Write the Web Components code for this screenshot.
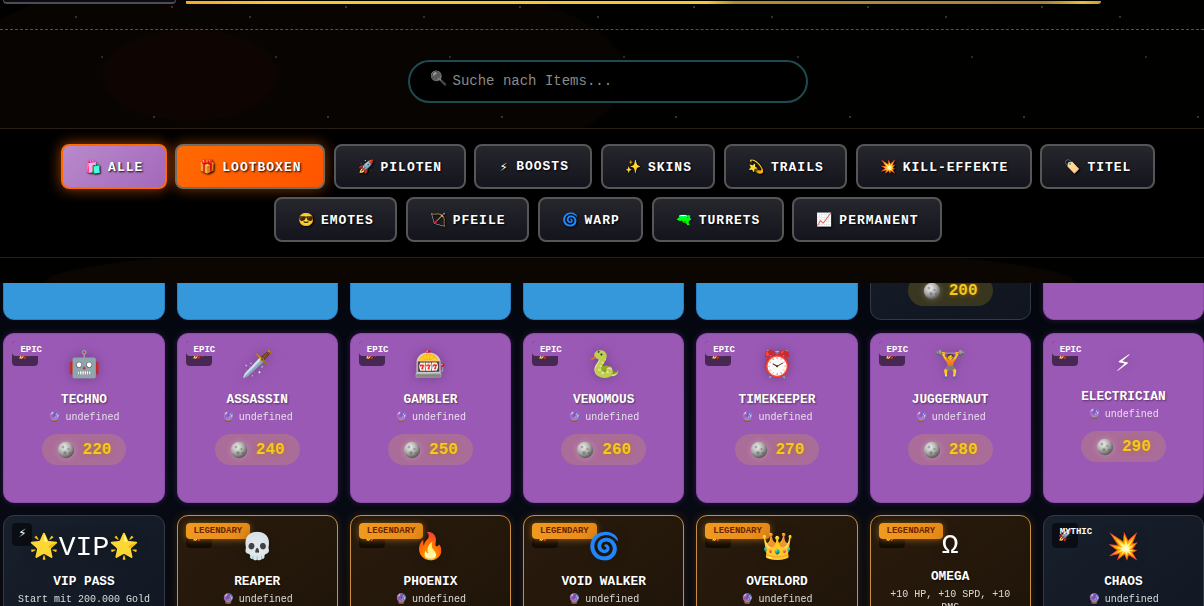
<!doctype html>
<html lang="de"><head><meta charset="utf-8"><title>Shop</title><style>
html,body{margin:0;padding:0;background:#000;overflow:hidden}
</style></head><body>
<x-shop></x-shop>
<template id="t-coin"><svg width="18" height="18" viewBox="0 0 18 18" aria-hidden="true"><defs><radialGradient id="c" cx=".38" cy=".32" r=".78"><stop offset="0" stop-color="#f2f2f0"/><stop offset=".5" stop-color="#aaaaa8"/><stop offset="1" stop-color="#3e3e3e"/></radialGradient></defs><circle cx="9" cy="9" r="8.2" fill="url(#c)"/><circle cx="6" cy="6" r="1.5" fill="#a5a5a3"/><circle cx="11.5" cy="8" r="1.1" fill="#8f8f8d"/><circle cx="8" cy="12" r="1.7" fill="#838382"/><circle cx="13" cy="12" r="1" fill="#6d6d6d"/></svg></template>
<script>
const MONO='"Liberation Mono",monospace';
class XTopbar extends HTMLElement{constructor(){super();this.attachShadow({mode:'open'}).innerHTML=`<style>
:host{display:flex;align-items:flex-start;gap:10px;box-sizing:border-box;height:30px;padding:0 0 0 3px;border-bottom:1px dashed #57524c;overflow:hidden}
.a{box-sizing:border-box;width:173px;height:4px;border:solid #4c4c54;border-width:0 1px 2px 1px;border-radius:0 0 6px 6px;background:#0b0b10}
.b{width:915px;height:3px;margin-top:.5px;border-radius:0 0 12px 4px;background:linear-gradient(90deg,#f3a92a 0,#f2c83a 10%,#f0c838 57%,#b08c30 60%,#a88630 94%,#e6bc3a 98%,#c9a030 100%)}
</style><div class="a"></div><div class="b"></div>`}}
class XSearch extends HTMLElement{constructor(){super();this.attachShadow({mode:'open'}).innerHTML=`<style>
:host{display:flex;justify-content:center;padding:30px 0 25px 11px}
.box{box-sizing:border-box;width:400px;height:43px;border:2px solid #1e4a50;border-radius:22px;background:#000;display:flex;align-items:center;gap:6px;padding:0 20px;color:#8a8a8a;font:14px ${MONO}}
.i{font-size:14px;filter:grayscale(1) brightness(.75);margin-top:-6px;line-height:1}
.t{margin-top:-1px}
</style><div class="box"><span class="i">🔍</span><span class="t"><slot></slot></span></div>`}}
class XFilter extends HTMLElement{constructor(){super();this.attachShadow({mode:'open'}).innerHTML=`<style>
:host{display:inline-flex;align-items:center;gap:7px;box-sizing:border-box;height:45px;padding:1px 21.5px 0 22px;border:2px solid #565656;border-radius:8px;background:linear-gradient(#26262d,#14141d);color:#fff;font:bold 13px ${MONO};letter-spacing:1px;text-shadow:1px 1px 2px #000;white-space:nowrap}
:host([b]){padding-top:0}
:host([v=all]){background:linear-gradient(135deg,#b98acb,#a468bb);border-color:#ff6a00;box-shadow:0 0 14px #ff6a00a0}
:host([v=on]){background:linear-gradient(135deg,#ff6a00,#ff5400);border-color:#6e6e66;box-shadow:0 0 14px #ff6a0080}
.i{font-size:13px;letter-spacing:0;width:16px;text-align:center;flex:none}
:host([b]) .i{width:11px}
:host([g=turret]) .i{filter:hue-rotate(85deg) saturate(1.4) brightness(1.35)}
:host([g=bag]) .i{filter:hue-rotate(170deg) saturate(1.6) brightness(1.2)}
</style><span class="i"></span><span><slot></slot></span>`;
}connectedCallback(){this.shadowRoot.querySelector('.i').textContent=this.getAttribute('i')}}
class XFilters extends HTMLElement{constructor(){super();this.attachShadow({mode:'open'}).innerHTML=`<style>
:host{display:flex;flex-wrap:wrap;justify-content:center;gap:8px 8.5px;box-sizing:border-box;height:130px;padding:15px 44px 15px 56px;background:#000;border:solid #2a2012;border-width:1px 0;align-content:flex-start}
</style><slot></slot>`}}
class XCard extends HTMLElement{constructor(){super();this.attachShadow({mode:'open'}).innerHTML=`<style>
:host{display:flex;flex-direction:column;align-items:center;position:relative;box-sizing:border-box;height:170px;border-radius:11px;padding-top:14px;color:#fff;font-family:${MONO};border:1px solid #8a4aa5;background:#9b59b6;text-align:center}
:host([r=rare]){background:#3498db;border-color:#2a80c0}
:host([r=epic]){background:#9b59b6;border-color:#8d4ca8;box-shadow:0 0 6px #6a2f8a66}
:host([r=legendary]){background:linear-gradient(145deg,#2a1c0d,#1c1208);border:1.5px solid #c98e3e;box-shadow:0 0 10px #c97f2033}
:host([r=plain]),:host([r=mythic]){background:linear-gradient(145deg,#18202c,#10151f);border:1px solid #323a46}
.type{position:absolute;top:7px;left:8px;box-sizing:border-box;width:26px;height:25px;padding-top:6px;border-radius:4px;background:rgba(0,0,0,.55);text-align:center;font-size:11.5px;line-height:14px}
:host([t=bolt]) .type{width:20px;height:23px;padding-top:4px;font-size:13px}
.rar{position:absolute;top:7px;left:8px;box-sizing:border-box;height:15px;padding:0 8px;font:bold 9px/18px ${MONO};color:#fff;border-radius:4px}
:host([r=epic]) .rar{background:#9b59b6}
:host([r=legendary]) .rar{top:7px;height:16px;line-height:17px;background:linear-gradient(90deg,#f09a20,#e68a18);color:#6d2300;box-shadow:0 1px 6px #f09a2080}
:host([r=mythic]) .rar{background:none}
:host([r=plain]) .rar,:host([r=rare]) .rar{display:none}
.ico{font:normal 26px/36px ${MONO};height:36px;filter:drop-shadow(0 0 6px rgba(0,0,0,.28));white-space:nowrap}
.ico b{font:inherit;font-size:24px;vertical-align:1px}
:host([big]) .ico,:host([short]) .ico{font-size:28px}
:host([short]) .ico{height:31px;line-height:31px}
:host([mid]) .ico{height:33px;line-height:33px}
h3{margin:7px 0 0;font:bold 12.8px/17px ${MONO};text-shadow:1px 1px 2px rgba(0,0,0,.45);white-space:nowrap}
.d{font:10px/13px ${MONO};color:#f2f2f2;opacity:.88;margin-top:3px;padding:0 8px;display:flex;gap:5px;align-items:center;white-space:nowrap}
:host([wrapd]) .d{white-space:normal;display:block}
.d i{font-style:normal;font-size:10px}
.p{display:flex;align-items:center;gap:8px;margin-top:10.5px;height:31px;box-sizing:border-box;padding:0 15px;border-radius:16px;background:rgba(241,196,15,.18);color:#f4c81c;font:bold 16px ${MONO};text-shadow:0 0 4px rgba(180,120,0,.8)}
.p svg{filter:drop-shadow(0 0 3px rgba(255,255,255,.25))}
:host([blank]) .type,:host([blank]) .rar,:host([blank]) .ico,:host([blank]) h3,:host([blank]) .d{display:none}
:host([blank]) .p{margin-top:110px}
.none{display:none}
</style><div class="type"></div><div class="rar"></div><div class="ico"></div><h3><slot></slot></h3><div class="d"></div><div class="p"></div>`}
connectedCallback(){const s=this.shadowRoot,g=n=>this.getAttribute(n);
s.querySelector('.type').textContent=g('t')==='bolt'?'⚡\uFE0E':'🚀';
if(!this.hasAttribute('blank'))s.querySelector('.rar').textContent=(g('r')||'').toUpperCase();
const ic=s.querySelector('.ico');
if(g('i')==='vip'){ic.innerHTML='<b>🌟</b>VIP<b>🌟</b>'}else ic.textContent=g('i')||'';
const d=s.querySelector('.d');
if(g('d')){d.textContent=g('d')}else{d.innerHTML='<i>🔮</i><span>undefined</span>'}
const p=s.querySelector('.p');
if(g('p')){p.appendChild(document.getElementById('t-coin').content.cloneNode(true));
const n=document.createElement('span');n.textContent=g('p');p.appendChild(n);}
else p.classList.add('none');}}
class XGrid extends HTMLElement{constructor(){super();this.attachShadow({mode:'open'}).innerHTML=`<style>
:host{display:block;height:323px;overflow:hidden;background:linear-gradient(#04070e,#060a14 60%,#0a0a10)}
.g{display:grid;grid-template-columns:repeat(7,1fr);gap:12.7px 12px;padding:0 0 0 3.4px;margin-top:-133px}
</style><div class="g"><slot></slot></div>`}}
class XShop extends HTMLElement{constructor(){super();this.attachShadow({mode:'open'}).innerHTML=`<style>
:host{display:block;width:1204px;height:606px;overflow:hidden;color:#fff;font-family:${MONO};
background-color:#010100;
background-image:radial-gradient(circle at 76px 17px,#3a3026 0 1px,transparent 1.5px),radial-gradient(circle at 172px 7px,#4a3018 0 1px,transparent 1.5px),radial-gradient(circle at 102px 57px,#2e2a26 0 1px,transparent 1.5px),radial-gradient(circle at 154px 117px,#4a3018 0 1px,transparent 1.5px),radial-gradient(ellipse 88px 46px at 190px 75px,#0e0402 98%,transparent),radial-gradient(ellipse 340px 110px at 290px 75px,#080402 98%,transparent),radial-gradient(ellipse 520px 40px at 560px 283px,#0b0602 98%,transparent);
background-size:174px 200px,174px 200px,174px 200px,174px 200px,auto,auto,auto;background-repeat:repeat,repeat,repeat,repeat,no-repeat,no-repeat,no-repeat}
.sp{height:25px}
</style><x-topbar></x-topbar><x-search><slot name="s"></slot></x-search><x-filters><slot name="f"></slot></x-filters><div class="sp"></div><x-grid><slot></slot></x-grid>`}}
[['x-topbar',XTopbar],['x-search',XSearch],['x-filter',XFilter],['x-filters',XFilters],['x-card',XCard],['x-grid',XGrid],['x-shop',XShop]].forEach(a=>customElements.define(a[0],a[1]));
const shop=document.querySelector('x-shop');
const sp=document.createElement('span');sp.slot='s';sp.textContent='Suche nach Items...';shop.appendChild(sp);
[['🛍️','ALLE','all','bag'],['🎁','LOOTBOXEN','on'],['🚀','PILOTEN'],['⚡','BOOSTS','','',1],['✨','SKINS'],['💫','TRAILS'],['💥','KILL-EFFEKTE'],['🏷️','TITEL'],['😎','EMOTES'],['🏹','PFEILE'],['🌀','WARP'],['🔫','TURRETS','','turret'],['📈','PERMANENT']].forEach(f=>{
const e=document.createElement('x-filter');e.slot='f';e.setAttribute('i',f[0]);if(f[2])e.setAttribute('v',f[2]);if(f[3])e.setAttribute('g',f[3]);if(f[4])e.setAttribute('b','');e.textContent=f[1];shop.appendChild(e)});
const cards=[
{r:'rare',blank:1},{r:'rare',blank:1},{r:'rare',blank:1},{r:'rare',blank:1},{r:'rare',blank:1},{r:'plain',blank:1,p:'200'},{r:'epic',blank:1},
{r:'epic',i:'🤖',n:'TECHNO',p:'220'},{r:'epic',i:'🗡️',n:'ASSASSIN',p:'240'},{r:'epic',i:'🎰',n:'GAMBLER',p:'250'},{r:'epic',i:'🐍',n:'VENOMOUS',p:'260'},{r:'epic',i:'⏰',n:'TIMEKEEPER',p:'270'},{r:'epic',i:'🏋️',n:'JUGGERNAUT',p:'280'},{r:'epic',i:'⚡\uFE0E',n:'ELECTRICIAN',p:'290',mid:1},
{r:'plain',i:'vip',n:'VIP PASS',d:'Start mit 200.000 Gold',big:1,t:'bolt'},{r:'legendary',i:'💀',n:'REAPER'},{r:'legendary',i:'🔥',n:'PHOENIX'},{r:'legendary',i:'🌀',n:'VOID WALKER'},{r:'legendary',i:'👑',n:'OVERLORD'},{r:'legendary',i:'Ω',n:'OMEGA',d:'+10 HP, +10 SPD, +10 DMG',short:1,wrapd:1},{r:'mythic',i:'💥',n:'CHAOS'}];
cards.forEach(c=>{const e=document.createElement('x-card');
for(const k of ['r','i','p','d','t'])if(c[k])e.setAttribute(k,c[k]);
for(const k of ['blank','big','short','mid','wrapd'])if(c[k])e.setAttribute(k,'');
if(c.n)e.textContent=c.n;shop.appendChild(e)});
</script></body></html>
